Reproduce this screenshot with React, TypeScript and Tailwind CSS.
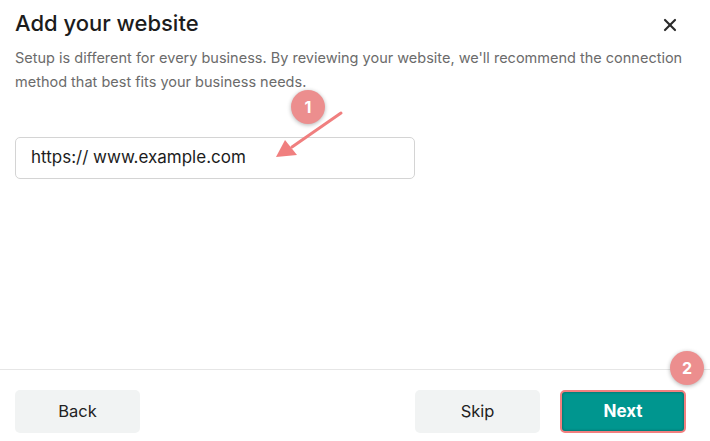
import { X } from 'lucide-react';

// Numbered callout bubble used by the walkthrough overlay
function Callout({ n, className }: { n: number; className: string }) {
  return (
    <div
      className={`absolute w-[34px] h-[34px] rounded-full bg-[#ec8e8e] text-white font-bold text-[16px] flex items-center justify-center shadow-[0_1px_4px_rgba(0,0,0,0.3)] ${className}`}
    >
      {n}
    </div>
  );
}

export default function App() {
  return (
    <div
      className="relative w-[710px] h-[441px] bg-white flex flex-col overflow-hidden"
      style={{ fontFamily: 'Inter, "Liberation Sans", sans-serif' }}
    >
      {/* Header */}
      <div className="flex items-start justify-between pl-[15px] pr-[30px] pt-[9px]">
        <h1 className="text-[22px] leading-[28px] font-medium text-[#1c1c1c]">Add your website</h1>
        <button className="mt-[6px] text-[#2a2a2a]">
          <X size={20} strokeWidth={2.6} />
        </button>
      </div>

      {/* Body */}
      <div className="flex-1 px-[15px]">
        <p className="mt-[9px] text-[14.5px] leading-[24px] text-[#6b6b6b] pr-[10px]">
          Setup is different for every business. By reviewing your website, we'll recommend the connection method that best fits your business needs.
        </p>
        <div className="mt-[43px] w-[400px] h-[42px] border border-[#d4d4d4] rounded-[5px] flex items-center pl-[15px] text-[17px] text-[#1c1c1c]">
          https:// www.example.com
        </div>
      </div>

      {/* Footer */}
      <div className="border-t border-[#e6e6e6] flex items-center px-[15px] pt-[20px] pb-[8px]">
        <button className="w-[125px] h-[43px] rounded-[5px] bg-[#f1f3f3] text-[16.5px] text-[#222]">Back</button>
        <div className="flex-1" />
        <button className="w-[125px] h-[43px] rounded-[5px] bg-[#f1f3f3] text-[16.5px] text-[#222]">Skip</button>
        <button className="ml-[20px] mr-[9px] w-[126px] h-[43px] rounded-[5px] bg-[#00968f] border-2 border-[#f27f7f] text-white font-bold text-[17px] shadow-[inset_0_0_3px_rgba(0,0,0,0.35)]">
          Next
        </button>
      </div>

      {/* Annotations */}
      <Callout n={1} className="left-[291px] top-[90px]" />
      <svg className="absolute left-0 top-0 pointer-events-none" width="710" height="441">
        <line x1="341" y1="113" x2="292" y2="147" stroke="#f07f7f" strokeWidth="3" strokeLinecap="round" />
        <polygon points="276,157 285,140 297,155" fill="#f07f7f" />
      </svg>
      <Callout n={2} className="left-[670px] top-[351px]" />
    </div>
  );
}
